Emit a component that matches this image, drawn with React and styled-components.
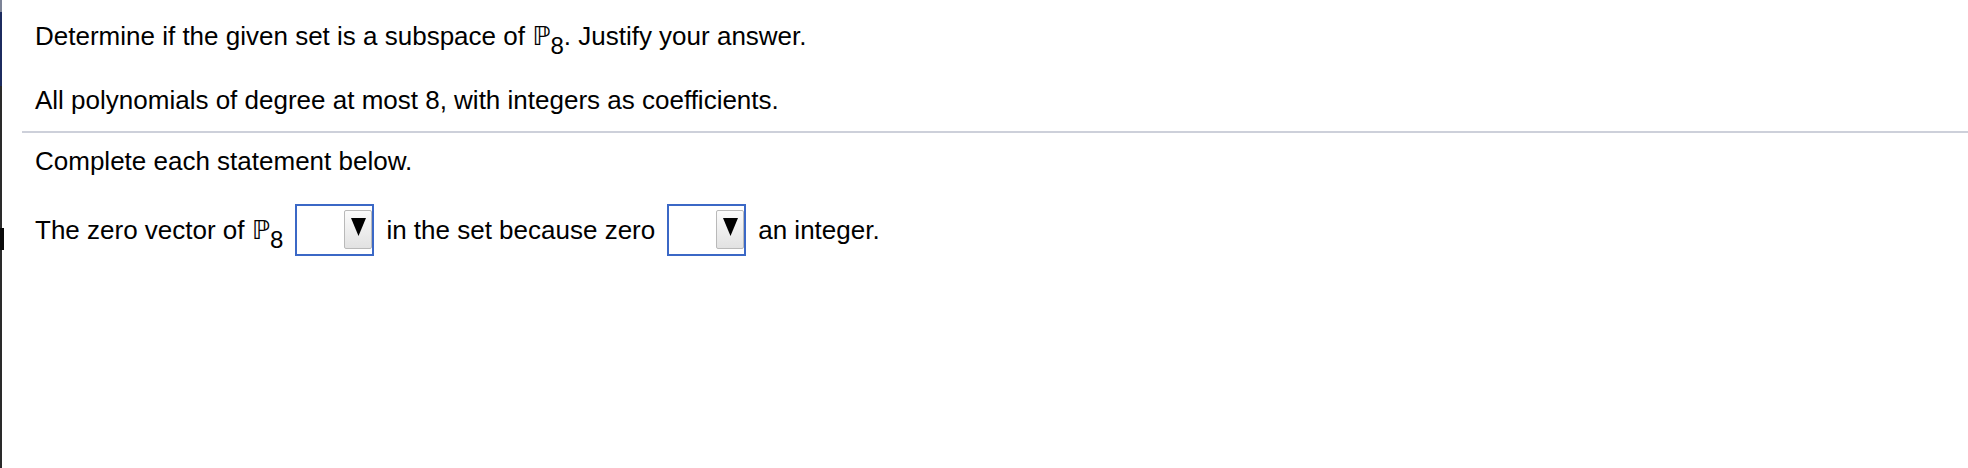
import React from "react";
import styled, { createGlobalStyle } from "styled-components";

const GlobalStyle = createGlobalStyle`
  html, body {
    margin: 0;
    padding: 0;
    background: #ffffff;
  }
  body {
    font-family: "Liberation Sans", Arial, sans-serif;
    color: #000;
  }
`;

const Dropdown = () => (
  <StyledDropdown>
    <DropButton>
      <svg width="15" height="18" viewBox="0 0 15 18">
        <polygon points="0,0 15,0 7.5,18" fill="#000" />
      </svg>
    </DropButton>
  </StyledDropdown>
);

const App = () => {
  return (
    <>
      <GlobalStyle />
      <Page>
        <Rail />
        <Content>
          <Intro>
            <Line>
              Determine if the given set is a subspace of{" "}
              <Space>
                ℙ<Sub>8</Sub>
              </Space>
              . Justify your answer.
            </Line>
            <Line gap="34px">
              All polynomials of degree at most 8, with integers as
              coefficients.
            </Line>
          </Intro>
          <Work>
            <Line>Complete each statement below.</Line>
            <Statement>
              <span>
                The zero vector of{" "}
                <Space>
                  ℙ<Sub>8</Sub>
                </Space>
              </span>
              <Dropdown />
              <span>in the set because zero</span>
              <Dropdown />
              <span>an integer.</span>
            </Statement>
          </Work>
        </Content>
      </Page>
    </>
  );
};

const Page = styled.div`
  display: flex;
  width: 1968px;
  height: 468px;
  overflow: hidden;
  background: #fff;
`;

const Rail = styled.div`
  flex: 0 0 4px;
  height: 100%;
  background:
    linear-gradient(#0a0a0a, #0a0a0a) 0 228px / 4px 22px no-repeat,
    linear-gradient(
        to bottom,
        #7c8397 0,
        #7c8397 12px,
        #1c2b5f 12px,
        #1c2b5f 86px,
        #2a2a2a 86px,
        #2a2a2a 100%
      )
      0 0 / 2px 100% no-repeat;
`;

const Content = styled.div`
  flex: 1;
  padding-left: 18px;
`;

const Intro = styled.div`
  padding: 21px 0 16px 13px;
  border-bottom: 2px solid #cdd0da;
`;

const Work = styled.div`
  padding: 13px 0 0 13px;
`;

const Line = styled.p`
  margin: ${({ gap }) => gap || "0"} 0 0 0;
  font-size: 26px;
  line-height: 30px;
  white-space: nowrap;
`;

const Space = styled.span`
  font-family: "DejaVu Sans", "Liberation Sans", sans-serif;
`;

const Sub = styled.span`
  font-family: "Liberation Sans", Arial, sans-serif;
  font-size: 24px;
  line-height: 0;
  vertical-align: -9px;
`;

const Statement = styled.div`
  margin-top: 28px;
  display: flex;
  align-items: center;
  gap: 12px;
  font-size: 26px;
  line-height: 30px;
  white-space: nowrap;
`;

const StyledDropdown = styled.div`
  box-sizing: border-box;
  width: 79px;
  height: 52px;
  border: 2px solid #3b68c6;
  background: #fff;
  display: flex;
  justify-content: flex-end;
  padding-top: 4px;
`;

const DropButton = styled.div`
  box-sizing: border-box;
  width: 28px;
  height: 39px;
  border: 1px solid #b9b9b9;
  border-radius: 2px;
  background: linear-gradient(to bottom, #fbfbfb, #e2e2e2);
  display: flex;
  justify-content: center;
  padding-top: 7px;
`;

export default App;
